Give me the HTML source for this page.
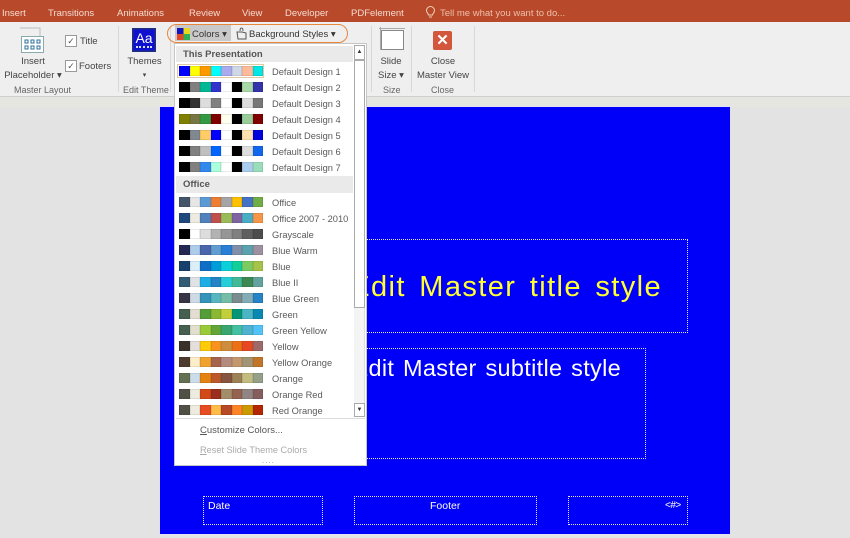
<!DOCTYPE html>
<html><head><meta charset="utf-8"><style>
html,body{margin:0;padding:0}
body{width:850px;height:538px;overflow:hidden;position:relative;background:#e3e3e3;font-family:"Liberation Sans",sans-serif;font-size:9.500px;color:#444}
div,span.a,svg{position:absolute}
.t{white-space:nowrap;line-height:12px}
.tab{top:7.500px;color:#f6dcd2;font-size:9.500px;white-space:nowrap;line-height:12px}
.c{text-align:center}
.g{color:#666;font-size:9px;top:84px;line-height:12px;white-space:nowrap}
.sep{top:26px;width:1px;height:66px;background:#d8d8d8}
.cb{width:10px;height:10px;border:1px solid #999;background:#fff;color:#555;font-size:9px;line-height:10px;text-align:center}
.r{left:179px;width:84px;height:10px;display:flex}
.r i{flex:1;display:block;box-shadow:inset 0 0 0 .5px rgba(0,0,0,.16)}
.l{left:272px;color:#5a5a5a;font-size:9.300px;line-height:12px;white-space:nowrap;margin-top:1px}
.box{border:1px dotted #e4e4ff;box-sizing:border-box}
</style></head><body>
<div style="left:0;top:0;width:850px;height:22px;background:#b8492a"></div>
<div class="tab" style="left:2px">Insert</div>
<div class="tab" style="left:48px">Transitions</div>
<div class="tab" style="left:117px">Animations</div>
<div class="tab" style="left:189px">Review</div>
<div class="tab" style="left:242px">View</div>
<div class="tab" style="left:285px">Developer</div>
<div class="tab" style="left:351px">PDFelement</div>
<svg style="left:425px;top:6px" width="11" height="13" viewBox="0 0 11 13" fill="none" stroke="#f0d0b8"><path d="M3.500 9C3 7 1.500 6.500 1.500 4.500a4 4 0 0 1 8 0C9.500 6.500 8 7 7.500 9zM4 11h3"/></svg>
<div class="tab" style="left:440px;color:#eebfab">Tell me what you want to do...</div>

<div style="left:0;top:22px;width:850px;height:74px;background:#efefef"></div>
<div style="left:0;top:96px;width:850px;height:1px;background:#cfcfcf"></div>
<div style="left:0;top:97px;width:850px;height:10px;background:#e6e6e0"></div>
<div class="sep" style="left:118px"></div>
<div class="sep" style="left:170px"></div>
<div class="sep" style="left:371px"></div>
<div class="sep" style="left:411px"></div>
<div class="sep" style="left:474px"></div>

<svg style="left:19px;top:27px" width="27" height="28" viewBox="0 0 27 28" fill="none"><path d="M1 1h20v8" stroke="#bbb"/><rect x="2.500" y="9.500" width="22" height="16" fill="#fff" stroke="#8aa"/><path d="M6 13h3v3H6zM12 13h3v3h-3zM18 13h3v3h-3zM6 19h3v3H6zM12 19h3v3h-3zM18 19h3v3h-3z" stroke="#2e6e9e"/></svg>
<div class="t c" style="left:0;width:66px;top:56px">Insert</div>
<div class="t c" style="left:0;width:66px;top:69.500px">Placeholder ▾</div>
<div class="cb" style="left:65px;top:35px">✓</div><div class="t" style="left:80px;top:35.500px">Title</div>
<div class="cb" style="left:65px;top:60px">✓</div><div class="t" style="left:79px;top:60.500px">Footers</div>
<div class="g" style="left:14px">Master Layout</div>

<div style="left:132px;top:28px;width:24px;height:24px;background:#0f0fd0;box-shadow:inset 0 0 0 1.500px #22307e;color:#fff;font:14px/21px 'Liberation Sans',sans-serif;text-align:center">Aa</div>
<div style="left:136px;top:46px;width:16px;height:0;border-top:2px dotted #cfe0ff"></div>
<div class="t c" style="left:119px;width:51px;top:56px">Themes</div>
<div class="t c" style="left:119px;width:51px;top:69.500px;font-size:7px">▾</div>
<div class="g" style="left:123px">Edit Theme</div>

<div style="left:175px;top:25px;width:56px;height:16px;background:#c9c9c9"></div>
<div style="left:167px;top:24px;width:181px;height:19px;border:1.500px solid #e8863a;border-radius:10px;box-sizing:border-box"></div>
<svg style="left:177px;top:28px" width="13" height="12"><rect width="6.500" height="6" fill="#1515c0"/><rect x="6.500" width="6.500" height="6" fill="#e8d820"/><rect y="6" width="6.500" height="6" fill="#e04828"/><rect x="6.500" y="6" width="6.500" height="6" fill="#30b050"/></svg>
<div class="t" style="left:192px;top:28.500px;color:#333">Colors ▾</div>
<svg style="left:235px;top:27px" width="13" height="13" fill="none" stroke="#555"><path d="M2 5h5l4 1v6H3zM5 4c0-4 3-4 3 0"/></svg>
<div class="t" style="left:249px;top:28.500px;color:#333">Background Styles ▾</div>

<svg style="left:379px;top:27px" width="27" height="24" fill="none"><path d="M0 1.500h26M1.500 0v23" stroke="#aaa"/><rect x="2.500" y="3.500" width="22" height="19" fill="#fff" stroke="#888"/></svg>
<div class="t c" style="left:371px;width:40px;top:56px">Slide</div>
<div class="t c" style="left:371px;width:40px;top:69.500px">Size ▾</div>
<div class="g" style="left:383px">Size</div>

<div style="left:433px;top:31px;width:19px;height:19px;background:#d2573c;border-radius:2px;color:#fff;font:bold 15px/19px 'Liberation Sans',sans-serif;text-align:center">✕</div>
<div class="t c" style="left:412px;width:62px;top:56px">Close</div>
<div class="t c" style="left:412px;width:62px;top:69.500px">Master View</div>
<div class="g" style="left:431px">Close</div>

<div style="left:160px;top:107px;width:570px;height:427px;background:#0000f8;outline:1px solid #e4def8"></div>
<div class="box" style="left:300px;top:239px;width:388px;height:94px"></div>
<div class="box" style="left:300px;top:348px;width:346px;height:111px"></div>
<div class="box" style="left:203px;top:496px;width:120px;height:29px"></div>
<div class="box" style="left:354px;top:496px;width:183px;height:29px"></div>
<div class="box" style="left:568px;top:496px;width:120px;height:29px"></div>
<div class="t" style="right:188px;top:270px;color:#ffff33;font-size:29px;line-height:34px;letter-spacing:1.400px;word-spacing:4px">Edit Master title style</div>
<div class="t" style="right:229px;top:353px;color:#fff;font-size:23.500px;line-height:30px;letter-spacing:.3px;word-spacing:2px">Edit Master subtitle style</div>
<div class="t" style="left:208px;top:500px;color:#fff;font-size:10.500px">Date</div>
<div class="t" style="left:430px;top:500px;color:#fff;font-size:10.500px">Footer</div>
<div class="t" style="left:665px;top:500px;color:#fff;font-size:10px;letter-spacing:-.5px">&lt;#&gt;</div>

<div style="left:174px;top:43px;width:193px;height:423px;background:#fff;border:1px solid #c6c6c6;box-sizing:border-box"></div>
<div style="left:176px;top:46px;width:177px;height:16px;background:#eaeaea"></div>
<div class="t" style="left:183px;top:48.500px;font-weight:bold;font-size:9.500px;color:#555">This Presentation</div>
<div style="left:176px;top:176px;width:177px;height:17px;background:#eaeaea"></div>
<div class="t" style="left:183px;top:179px;font-weight:bold;font-size:9.500px;color:#555">Office</div>
<div style="left:177px;top:64px;width:87px;height:14px;box-sizing:border-box;border:1px solid #e0c9a0"></div>

<div style="left:354px;top:45px;width:11px;height:372px;background:#f4f4f4;box-sizing:border-box;border-right:1px solid #ddd"></div>
<div style="left:354px;top:45px;width:11px;height:15px;background:#fff;border:1px solid #aaa;box-sizing:border-box;font-size:6px;line-height:13px;text-align:center;color:#333">▲</div>
<div style="left:354px;top:60px;width:11px;height:248px;background:#fff;border:1px solid #aaa;box-sizing:border-box"></div>
<div style="left:354px;top:403px;width:11px;height:14px;background:#fff;border:1px solid #aaa;box-sizing:border-box;font-size:6px;line-height:12px;text-align:center;color:#333">▼</div>

<div class="r" style="top:66px"><i style="background:#0000ff"></i><i style="background:#ffff00"></i><i style="background:#ff9900"></i><i style="background:#00ffff"></i><i style="background:#aaaaee"></i><i style="background:#d0d8e8"></i><i style="background:#ffbb99"></i><i style="background:#00e5e5"></i></div>
<div class="r" style="top:82px"><i style="background:#000"></i><i style="background:#808080"></i><i style="background:#00b894"></i><i style="background:#3333cc"></i><i style="background:#fff"></i><i style="background:#000"></i><i style="background:#a8d8a8"></i><i style="background:#3333aa"></i></div>
<div class="r" style="top:98px"><i style="background:#000"></i><i style="background:#333"></i><i style="background:#ddd"></i><i style="background:#808080"></i><i style="background:#fff"></i><i style="background:#000"></i><i style="background:#ddd"></i><i style="background:#777"></i></div>
<div class="r" style="top:114px"><i style="background:#808000"></i><i style="background:#777744"></i><i style="background:#339944"></i><i style="background:#800000"></i><i style="background:#fffff0"></i><i style="background:#000"></i><i style="background:#99cc99"></i><i style="background:#800000"></i></div>
<div class="r" style="top:130px"><i style="background:#000"></i><i style="background:#808890"></i><i style="background:#ffcc66"></i><i style="background:#0000ff"></i><i style="background:#fff"></i><i style="background:#000"></i><i style="background:#ffe0b0"></i><i style="background:#0000dd"></i></div>
<div class="r" style="top:146px"><i style="background:#000"></i><i style="background:#808080"></i><i style="background:#c0c0c0"></i><i style="background:#0066ff"></i><i style="background:#fff"></i><i style="background:#000"></i><i style="background:#ddd"></i><i style="background:#1166ee"></i></div>
<div class="r" style="top:162px"><i style="background:#000"></i><i style="background:#808080"></i><i style="background:#3388ee"></i><i style="background:#aaffdd"></i><i style="background:#fff"></i><i style="background:#000"></i><i style="background:#aaccee"></i><i style="background:#99ddbb"></i></div>

<div class="r" style="top:197px"><i style="background:#44546a"></i><i style="background:#e7e6e6"></i><i style="background:#5b9bd5"></i><i style="background:#ed7d31"></i><i style="background:#a5a5a5"></i><i style="background:#ffc000"></i><i style="background:#4472c4"></i><i style="background:#70ad47"></i></div>
<div class="r" style="top:213px"><i style="background:#1f497d"></i><i style="background:#eeece1"></i><i style="background:#4f81bd"></i><i style="background:#c0504d"></i><i style="background:#9bbb59"></i><i style="background:#8064a2"></i><i style="background:#4bacc6"></i><i style="background:#f79646"></i></div>
<div class="r" style="top:229px"><i style="background:#000"></i><i style="background:#fff"></i><i style="background:#ddd"></i><i style="background:#b2b2b2"></i><i style="background:#969696"></i><i style="background:#808080"></i><i style="background:#5f5f5f"></i><i style="background:#4d4d4d"></i></div>
<div class="r" style="top:245px"><i style="background:#242852"></i><i style="background:#acccea"></i><i style="background:#4a66ac"></i><i style="background:#629dd1"></i><i style="background:#297fd5"></i><i style="background:#7f8fa9"></i><i style="background:#5aa2ae"></i><i style="background:#9d90a0"></i></div>
<div class="r" style="top:261px"><i style="background:#17406d"></i><i style="background:#dbeff9"></i><i style="background:#0f6fc6"></i><i style="background:#009dd9"></i><i style="background:#0bd0d9"></i><i style="background:#10cf9b"></i><i style="background:#7cca62"></i><i style="background:#a5c249"></i></div>
<div class="r" style="top:277px"><i style="background:#335b74"></i><i style="background:#dfe3e5"></i><i style="background:#1cade4"></i><i style="background:#2683c6"></i><i style="background:#27ced7"></i><i style="background:#42ba97"></i><i style="background:#3e8853"></i><i style="background:#62a39f"></i></div>
<div class="r" style="top:293px"><i style="background:#373545"></i><i style="background:#cedbe6"></i><i style="background:#3494ba"></i><i style="background:#58b6c0"></i><i style="background:#75bda7"></i><i style="background:#7a8c8e"></i><i style="background:#84acb6"></i><i style="background:#2683c6"></i></div>
<div class="r" style="top:309px"><i style="background:#455f51"></i><i style="background:#e3ded1"></i><i style="background:#549e39"></i><i style="background:#8ab833"></i><i style="background:#c0cf3a"></i><i style="background:#029676"></i><i style="background:#4ab5c4"></i><i style="background:#0989b1"></i></div>
<div class="r" style="top:325px"><i style="background:#455f51"></i><i style="background:#e2dfcc"></i><i style="background:#99cb38"></i><i style="background:#63a537"></i><i style="background:#37a76f"></i><i style="background:#44c1a3"></i><i style="background:#4eb3cf"></i><i style="background:#51c3f9"></i></div>
<div class="r" style="top:341px"><i style="background:#39302a"></i><i style="background:#e5dedb"></i><i style="background:#ffca08"></i><i style="background:#f8931d"></i><i style="background:#ce8d3e"></i><i style="background:#ec7016"></i><i style="background:#e64823"></i><i style="background:#9c6a6a"></i></div>
<div class="r" style="top:357px"><i style="background:#4e3b30"></i><i style="background:#fbeec9"></i><i style="background:#f0a22e"></i><i style="background:#a5644e"></i><i style="background:#b58b80"></i><i style="background:#c3986d"></i><i style="background:#a19574"></i><i style="background:#c17529"></i></div>
<div class="r" style="top:373px"><i style="background:#637052"></i><i style="background:#ccddea"></i><i style="background:#e48312"></i><i style="background:#bd582c"></i><i style="background:#865640"></i><i style="background:#9b8357"></i><i style="background:#c2bc80"></i><i style="background:#94a088"></i></div>
<div class="r" style="top:389px"><i style="background:#505046"></i><i style="background:#eeece0"></i><i style="background:#d34817"></i><i style="background:#9b2d1f"></i><i style="background:#a28e6a"></i><i style="background:#956251"></i><i style="background:#918485"></i><i style="background:#855d5d"></i></div>
<div class="r" style="top:405px"><i style="background:#505046"></i><i style="background:#eeece0"></i><i style="background:#e84c22"></i><i style="background:#ffbd47"></i><i style="background:#b64926"></i><i style="background:#ff8427"></i><i style="background:#cc9900"></i><i style="background:#b22600"></i></div>

<div class="l" style="top:65px">Default Design 1</div>
<div class="l" style="top:81px">Default Design 2</div>
<div class="l" style="top:97px">Default Design 3</div>
<div class="l" style="top:113px">Default Design 4</div>
<div class="l" style="top:129px">Default Design 5</div>
<div class="l" style="top:145px">Default Design 6</div>
<div class="l" style="top:161px">Default Design 7</div>
<div class="l" style="top:196px">Office</div>
<div class="l" style="top:212px">Office 2007 - 2010</div>
<div class="l" style="top:228px">Grayscale</div>
<div class="l" style="top:244px">Blue Warm</div>
<div class="l" style="top:260px">Blue</div>
<div class="l" style="top:276px">Blue II</div>
<div class="l" style="top:292px">Blue Green</div>
<div class="l" style="top:308px">Green</div>
<div class="l" style="top:324px">Green Yellow</div>
<div class="l" style="top:340px">Yellow</div>
<div class="l" style="top:356px">Yellow Orange</div>
<div class="l" style="top:372px">Orange</div>
<div class="l" style="top:388px">Orange Red</div>
<div class="l" style="top:404px">Red Orange</div>

<div style="left:176px;top:418px;width:189px;height:1px;background:#ddd"></div>
<div class="t" style="left:200px;top:424.500px;color:#555;font-size:9.500px"><u>C</u>ustomize Colors...</div>
<div class="t" style="left:200px;top:444px;color:#aaa;font-size:9.200px"><u>R</u>eset Slide Theme Colors</div>
<div class="t" style="left:262px;top:455px;color:#999;font-size:8px;letter-spacing:1px">....</div>
</body></html>
